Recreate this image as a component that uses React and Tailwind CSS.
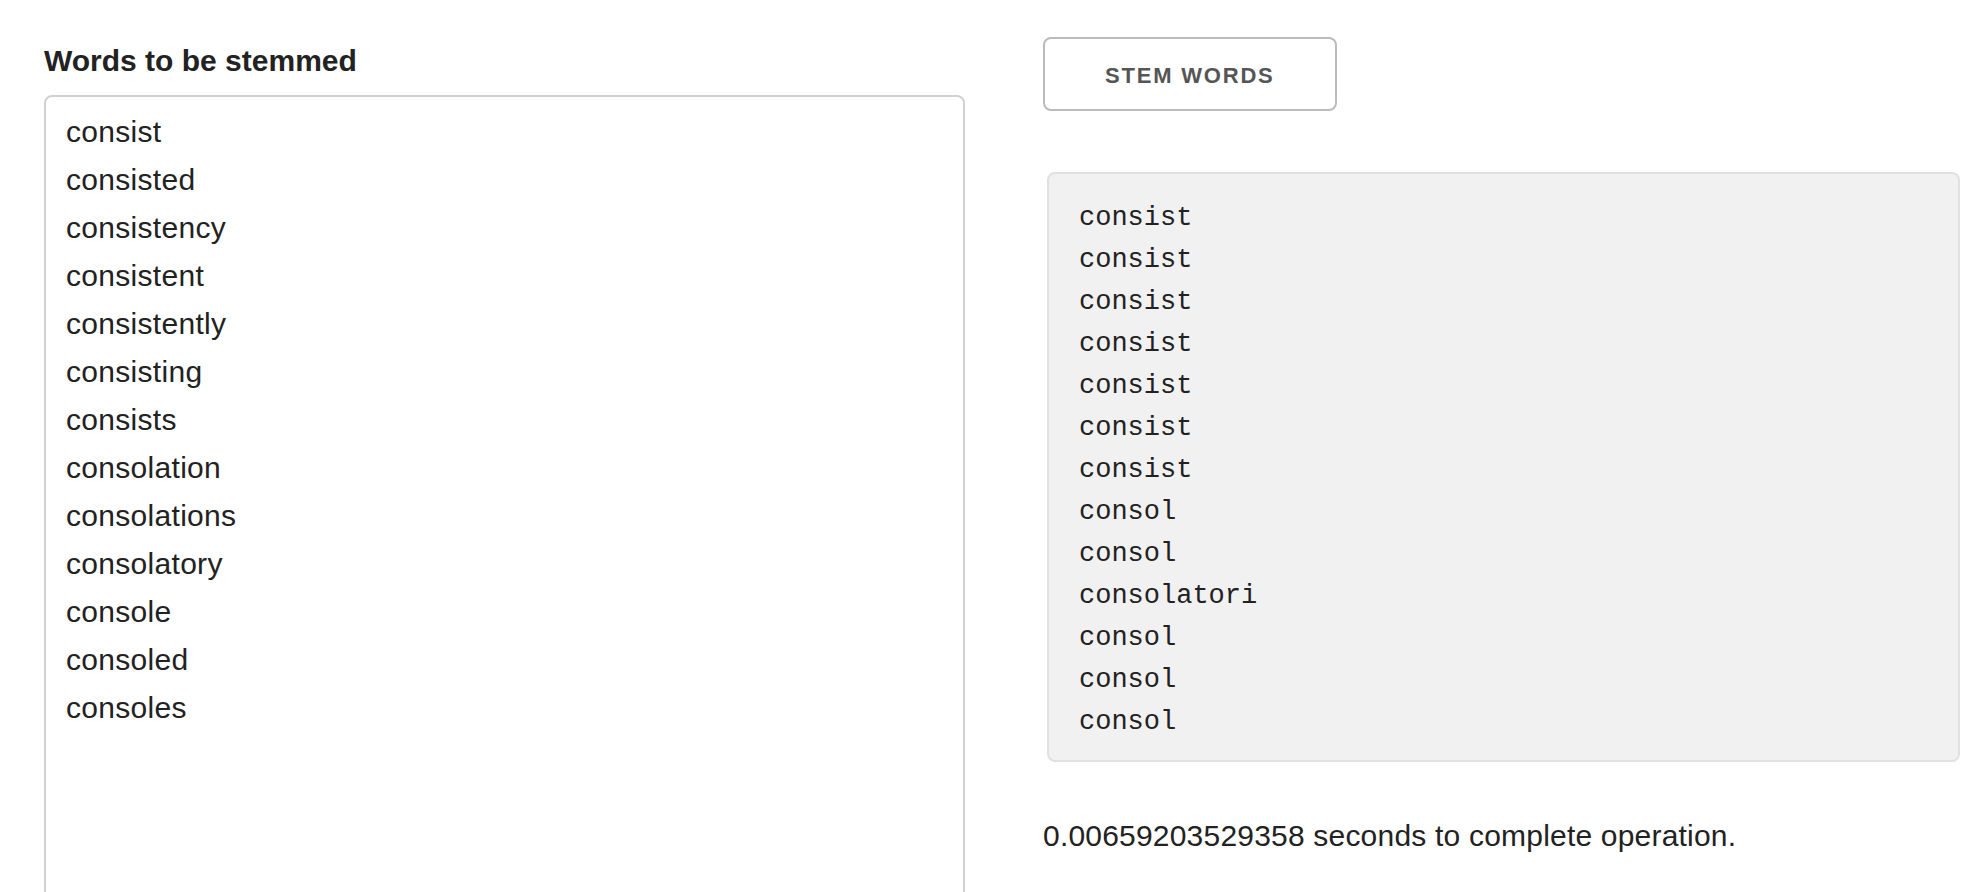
import React, { useState } from 'react';

const inputWords = [
  'consist',
  'consisted',
  'consistency',
  'consistent',
  'consistently',
  'consisting',
  'consists',
  'consolation',
  'consolations',
  'consolatory',
  'console',
  'consoled',
  'consoles',
];

const stems = [
  'consist',
  'consist',
  'consist',
  'consist',
  'consist',
  'consist',
  'consist',
  'consol',
  'consol',
  'consolatori',
  'consol',
  'consol',
  'consol',
];

const StemmerPage = () => {
  const [words, setWords] = useState(inputWords.join('\n'));

  return (
    <div className="min-h-screen bg-white text-[#222] font-['Liberation_Sans',Arial,sans-serif]">
      <div className="flex gap-[78px] pl-[44px] pt-[37px]">
        {/* Input column */}
        <div className="w-[921px] shrink-0">
          <label className="block text-[30px] leading-[48px] font-bold mb-[10px]">
            Words to be stemmed
          </label>
          <textarea
            value={words}
            onChange={(e) => setWords(e.target.value)}
            className="block w-full h-[900px] resize-none border-2 border-[#d1d1d1] rounded-[8px] px-[20px] pt-[11px] pb-[12px] text-[30px] leading-[48px] tracking-[0.3px] text-[#222] outline-none"
          />
        </div>

        {/* Output column */}
        <div className="w-[921px] shrink-0">
          <button className="h-[74px] px-[60px] border-2 border-[#bbb] rounded-[8px] bg-transparent text-[#555] text-[22px] font-bold uppercase tracking-[1.8px] leading-[74px]">
            Stem words
          </button>
          <pre className="mt-[61px] mb-[50px]">
            <code className="block mx-[4px] px-[30px] pt-[23px] pb-[17px] bg-[#f1f1f1] border-2 border-[#e1e1e1] rounded-[8px] text-[27px] leading-[42px] text-[#222] font-['Liberation_Mono','Courier_New',monospace] whitespace-pre">
              {stems.join('\n')}
            </code>
          </pre>
          <p className="text-[30px] leading-[48px] tracking-[0.2px]">
            0.00659203529358 seconds to complete operation.
          </p>
        </div>
      </div>
    </div>
  );
};

export default StemmerPage;
